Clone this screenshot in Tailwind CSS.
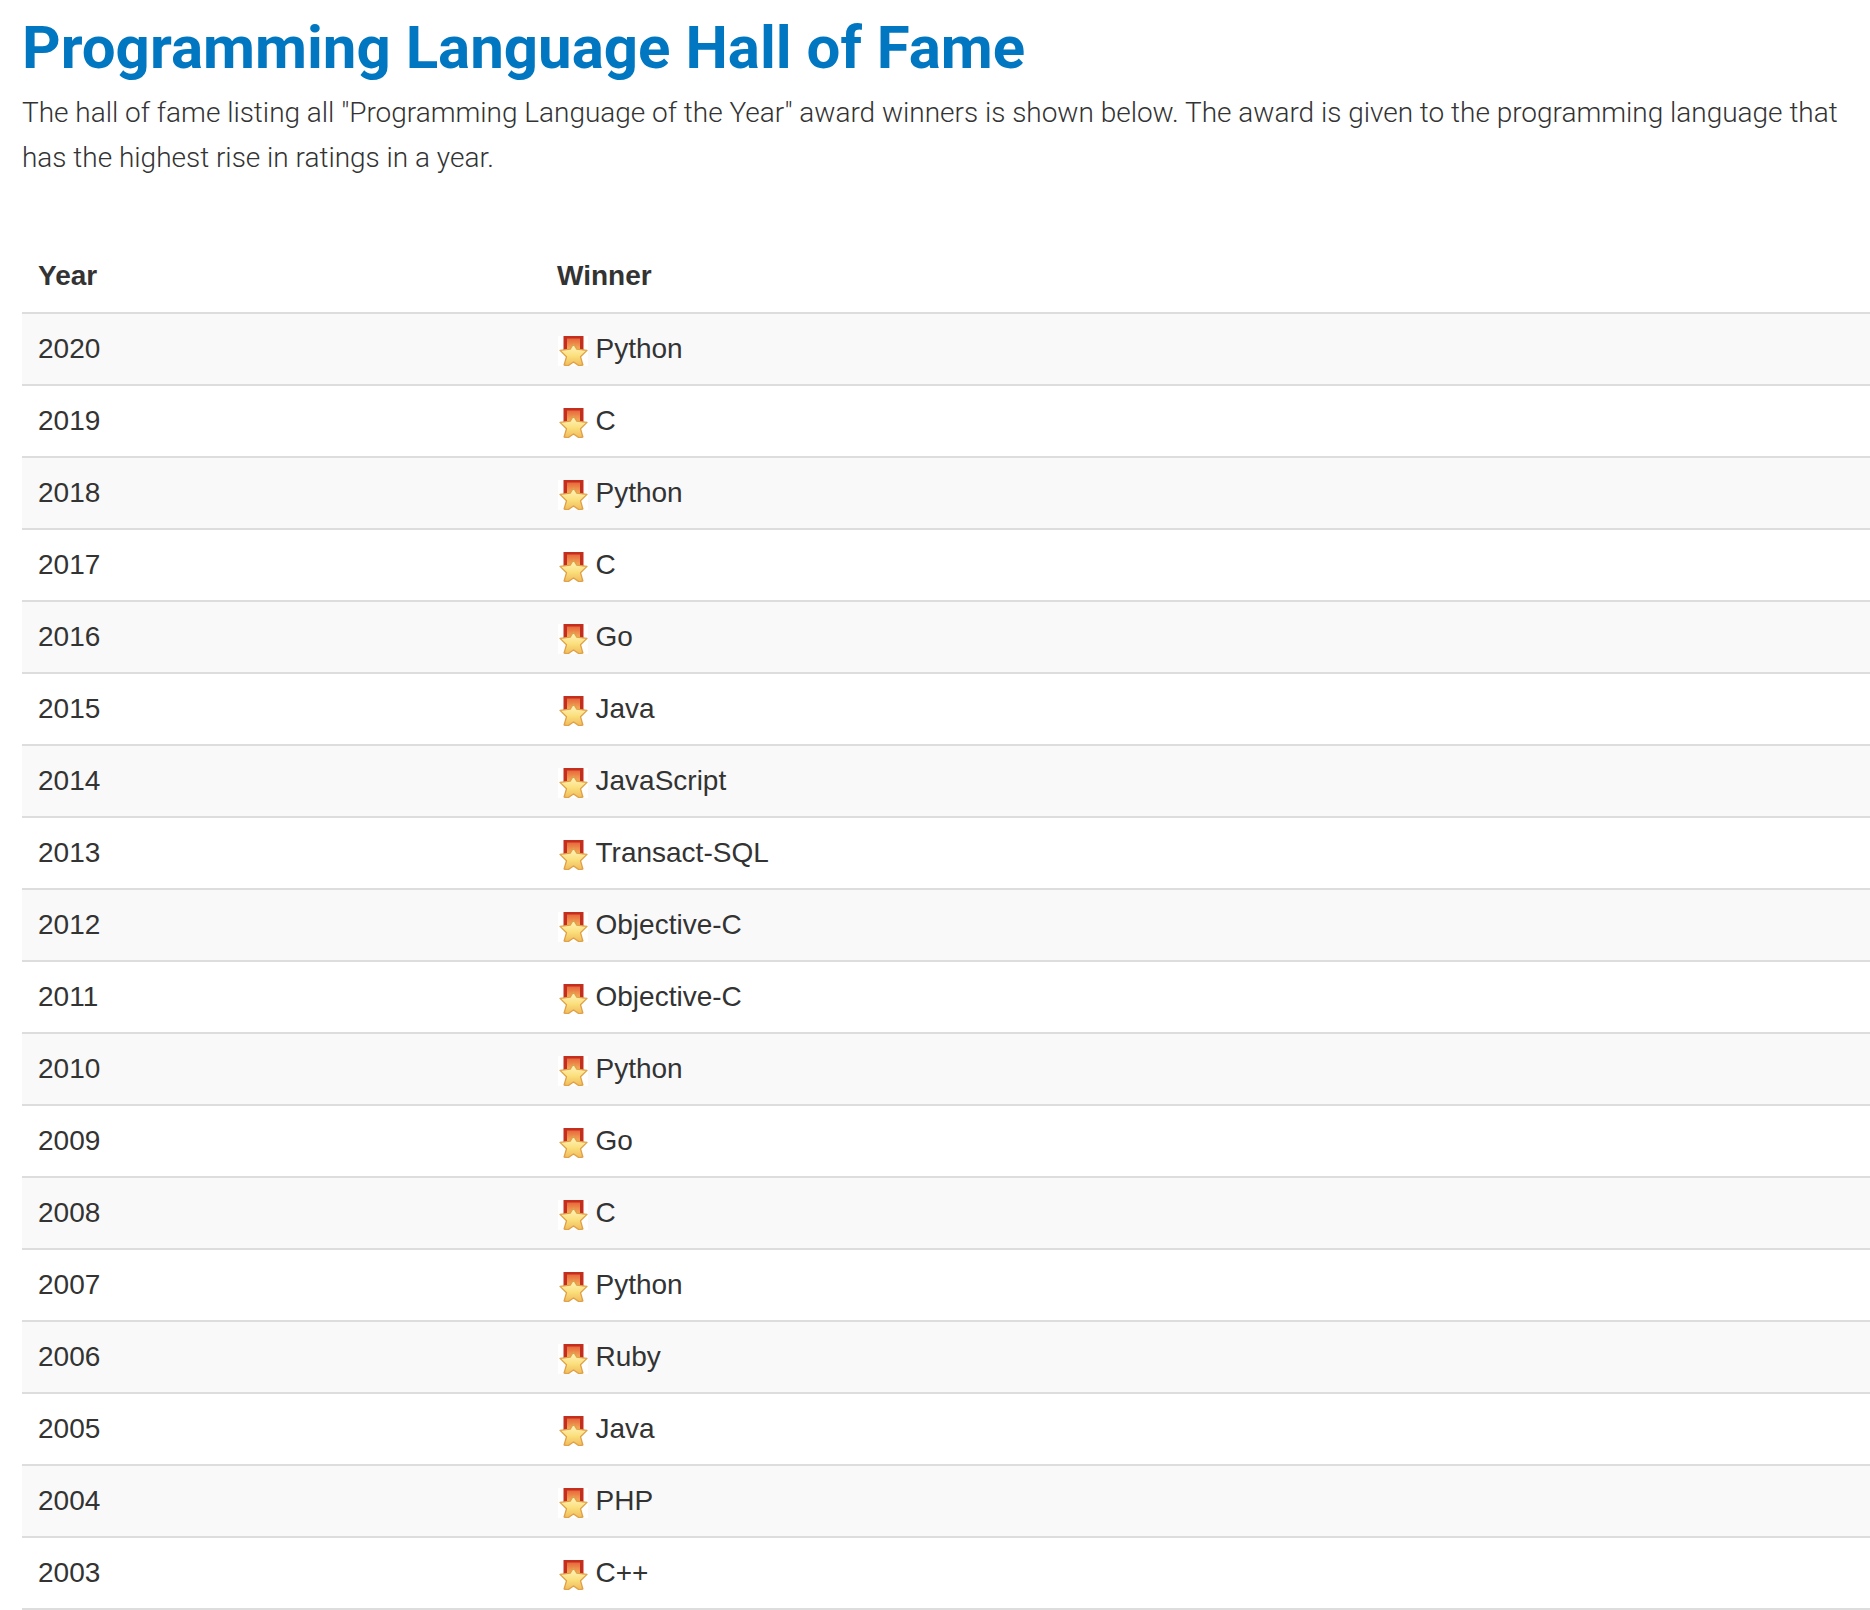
<!doctype html>
<html><head><meta charset="utf-8"><script src="https://cdn.jsdelivr.net/npm/@tailwindcss/browser@4"></script></head>
<body class="bg-white overflow-hidden">
<svg width="0" height="0" class="absolute"><defs>
<linearGradient id="star" x1="0" y1="0" x2="0" y2="1"><stop offset="0" stop-color="#fff6c4"/><stop offset="0.55" stop-color="#fbdf7c"/><stop offset="1" stop-color="#f0b95a"/></linearGradient>
<linearGradient id="rib" x1="0" y1="0" x2="0" y2="1"><stop offset="0" stop-color="#e8683c"/><stop offset="1" stop-color="#f6b860"/></linearGradient>
<symbol id="medal" viewBox="0 0 30 30">
<rect width="30" height="30" fill="#fff"/>
<path d="M5.5 0h20V15h-20z" fill="#c42e1e"/><path d="M9 2.5h13V15H9z" fill="url(#rib)"/>
<path d="M15.5 8 L18.8 13.2 L29 14.4 L22.5 20.8 L24.9 29 L21 29.8 L15.5 26 L10 29.8 L6.1 29 L8.5 20.8 L2 14.4 L12.2 13.2 Z" fill="url(#star)" stroke="#dfa048" stroke-width="1.3" stroke-linejoin="round"/>
</symbol></defs></svg>
<main class="pl-[22px] font-['Roboto',sans-serif] text-[#333]">
<h1 class="text-[#0077c0] font-bold text-[60px] leading-[72px] m-0 pt-[12px]">Programming Language Hall of Fame</h1>
<p class="font-light text-[28px] leading-[44.8px] tracking-[-0.016px] mt-[7px] w-[1848px]">The hall of fame listing all "Programming Language of the Year" award winners is shown below. The award is given to the programming language that has the highest rise in ratings in a year.</p>
<table class="w-[1848px] mt-[60px] border-collapse font-['Liberation_Sans',Arial,sans-serif] text-[28px] leading-[40px]">
<thead><tr class="border-b-2 border-[#ddd]"><th class="w-[535px] h-[72px] text-left font-bold pl-[16px]">Year</th><th class="text-left font-bold">Winner</th></tr></thead>
<tbody>
<tr class="h-[72px] border-b-2 border-[#ddd] bg-[#f9f9f9]"><td class="pl-[16px]">2020</td><td><svg class="inline-block w-[30px] h-[30px] ml-[1px] mr-[7.5px] align-[-8px] blur-[0.4px]"><use href="#medal"/></svg>Python</td></tr>
<tr class="h-[72px] border-b-2 border-[#ddd]"><td class="pl-[16px]">2019</td><td><svg class="inline-block w-[30px] h-[30px] ml-[1px] mr-[7.5px] align-[-8px] blur-[0.4px]"><use href="#medal"/></svg>C</td></tr>
<tr class="h-[72px] border-b-2 border-[#ddd] bg-[#f9f9f9]"><td class="pl-[16px]">2018</td><td><svg class="inline-block w-[30px] h-[30px] ml-[1px] mr-[7.5px] align-[-8px] blur-[0.4px]"><use href="#medal"/></svg>Python</td></tr>
<tr class="h-[72px] border-b-2 border-[#ddd]"><td class="pl-[16px]">2017</td><td><svg class="inline-block w-[30px] h-[30px] ml-[1px] mr-[7.5px] align-[-8px] blur-[0.4px]"><use href="#medal"/></svg>C</td></tr>
<tr class="h-[72px] border-b-2 border-[#ddd] bg-[#f9f9f9]"><td class="pl-[16px]">2016</td><td><svg class="inline-block w-[30px] h-[30px] ml-[1px] mr-[7.5px] align-[-8px] blur-[0.4px]"><use href="#medal"/></svg>Go</td></tr>
<tr class="h-[72px] border-b-2 border-[#ddd]"><td class="pl-[16px]">2015</td><td><svg class="inline-block w-[30px] h-[30px] ml-[1px] mr-[7.5px] align-[-8px] blur-[0.4px]"><use href="#medal"/></svg>Java</td></tr>
<tr class="h-[72px] border-b-2 border-[#ddd] bg-[#f9f9f9]"><td class="pl-[16px]">2014</td><td><svg class="inline-block w-[30px] h-[30px] ml-[1px] mr-[7.5px] align-[-8px] blur-[0.4px]"><use href="#medal"/></svg>JavaScript</td></tr>
<tr class="h-[72px] border-b-2 border-[#ddd]"><td class="pl-[16px]">2013</td><td><svg class="inline-block w-[30px] h-[30px] ml-[1px] mr-[7.5px] align-[-8px] blur-[0.4px]"><use href="#medal"/></svg>Transact-SQL</td></tr>
<tr class="h-[72px] border-b-2 border-[#ddd] bg-[#f9f9f9]"><td class="pl-[16px]">2012</td><td><svg class="inline-block w-[30px] h-[30px] ml-[1px] mr-[7.5px] align-[-8px] blur-[0.4px]"><use href="#medal"/></svg>Objective-C</td></tr>
<tr class="h-[72px] border-b-2 border-[#ddd]"><td class="pl-[16px]">2011</td><td><svg class="inline-block w-[30px] h-[30px] ml-[1px] mr-[7.5px] align-[-8px] blur-[0.4px]"><use href="#medal"/></svg>Objective-C</td></tr>
<tr class="h-[72px] border-b-2 border-[#ddd] bg-[#f9f9f9]"><td class="pl-[16px]">2010</td><td><svg class="inline-block w-[30px] h-[30px] ml-[1px] mr-[7.5px] align-[-8px] blur-[0.4px]"><use href="#medal"/></svg>Python</td></tr>
<tr class="h-[72px] border-b-2 border-[#ddd]"><td class="pl-[16px]">2009</td><td><svg class="inline-block w-[30px] h-[30px] ml-[1px] mr-[7.5px] align-[-8px] blur-[0.4px]"><use href="#medal"/></svg>Go</td></tr>
<tr class="h-[72px] border-b-2 border-[#ddd] bg-[#f9f9f9]"><td class="pl-[16px]">2008</td><td><svg class="inline-block w-[30px] h-[30px] ml-[1px] mr-[7.5px] align-[-8px] blur-[0.4px]"><use href="#medal"/></svg>C</td></tr>
<tr class="h-[72px] border-b-2 border-[#ddd]"><td class="pl-[16px]">2007</td><td><svg class="inline-block w-[30px] h-[30px] ml-[1px] mr-[7.5px] align-[-8px] blur-[0.4px]"><use href="#medal"/></svg>Python</td></tr>
<tr class="h-[72px] border-b-2 border-[#ddd] bg-[#f9f9f9]"><td class="pl-[16px]">2006</td><td><svg class="inline-block w-[30px] h-[30px] ml-[1px] mr-[7.5px] align-[-8px] blur-[0.4px]"><use href="#medal"/></svg>Ruby</td></tr>
<tr class="h-[72px] border-b-2 border-[#ddd]"><td class="pl-[16px]">2005</td><td><svg class="inline-block w-[30px] h-[30px] ml-[1px] mr-[7.5px] align-[-8px] blur-[0.4px]"><use href="#medal"/></svg>Java</td></tr>
<tr class="h-[72px] border-b-2 border-[#ddd] bg-[#f9f9f9]"><td class="pl-[16px]">2004</td><td><svg class="inline-block w-[30px] h-[30px] ml-[1px] mr-[7.5px] align-[-8px] blur-[0.4px]"><use href="#medal"/></svg>PHP</td></tr>
<tr class="h-[72px] border-b-2 border-[#ddd]"><td class="pl-[16px]">2003</td><td><svg class="inline-block w-[30px] h-[30px] ml-[1px] mr-[7.5px] align-[-8px] blur-[0.4px]"><use href="#medal"/></svg>C++</td></tr>
</tbody></table>
</main></body></html>
